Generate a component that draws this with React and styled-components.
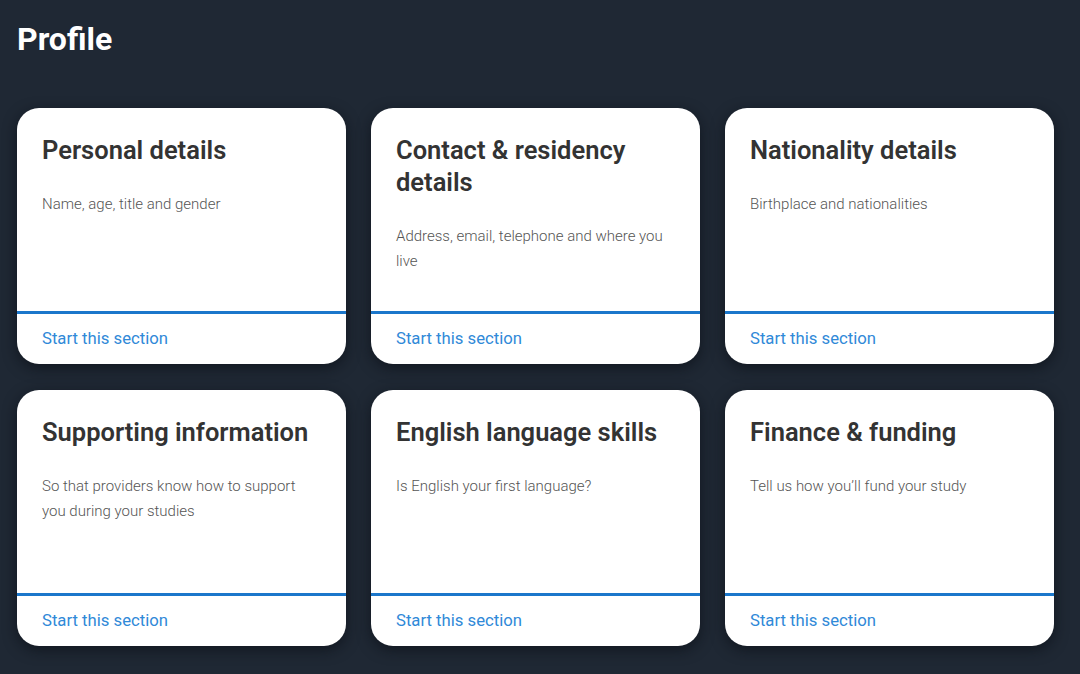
import React from "react";
import styled, { createGlobalStyle } from "styled-components";

const Global = createGlobalStyle`
  html, body { margin: 0; padding: 0; }
  body {
    background: #1f2834;
    font-family: Roboto, "Noto Sans", "Liberation Sans", sans-serif;
    min-height: 674px;
  }
`;

const Page = styled.main`
  padding: 19px 26px 24px 17px;
`;

const Heading = styled.h1`
  margin: 0 0 49px;
  font-size: 32px;
  line-height: 40px;
  font-weight: 700;
  color: #ffffff;
`;

const Grid = styled.div`
  display: grid;
  grid-template-columns: repeat(3, 329px);
  column-gap: 25px;
  row-gap: 26px;
`;

const Card = styled.section`
  background: #ffffff;
  border-radius: 22px;
  box-shadow: 0 4px 14px rgba(8, 12, 18, 0.6);
  overflow: hidden;
  display: flex;
  flex-direction: column;
  height: 256px;
`;

const Body = styled.div`
  height: 206px;
  box-sizing: border-box;
  padding: 26px 25px 0;
  border-bottom: 3px solid #1b77cb;
`;

const Title = styled.h2`
  margin: 0;
  font-size: 25.5px;
  line-height: 32px;
  font-weight: 600;
  color: #333333;
`;

const Desc = styled.p`
  margin: 26px 0 0;
  font-size: 15px;
  line-height: 25px;
  font-weight: 300;
  color: #555555;
`;

const Footer = styled.div`
  flex: 1;
  display: flex;
  align-items: center;
  padding: 0 25px;
`;

const Link = styled.a`
  font-size: 16.7px;
  color: #3089d8;
  text-decoration: none;
  line-height: 20px;
`;

const sections = [
  { title: "Personal details", desc: "Name, age, title and gender" },
  { title: "Contact & residency details", desc: "Address, email, telephone and where you live" },
  { title: "Nationality details", desc: "Birthplace and nationalities" },
  { title: "Supporting information", desc: "So that providers know how to support you during your studies" },
  { title: "English language skills", desc: "Is English your first language?" },
  { title: "Finance & funding", desc: "Tell us how you\u2019ll fund your study" },
];

export default function App() {
  return (
    <>
      <Global />
      <Page>
        <Heading>Profile</Heading>
        <Grid>
          {sections.map((s) => (
            <Card key={s.title}>
              <Body>
                <Title>{s.title}</Title>
                <Desc>{s.desc}</Desc>
              </Body>
              <Footer>
                <Link href="#">Start this section</Link>
              </Footer>
            </Card>
          ))}
        </Grid>
      </Page>
    </>
  );
}
